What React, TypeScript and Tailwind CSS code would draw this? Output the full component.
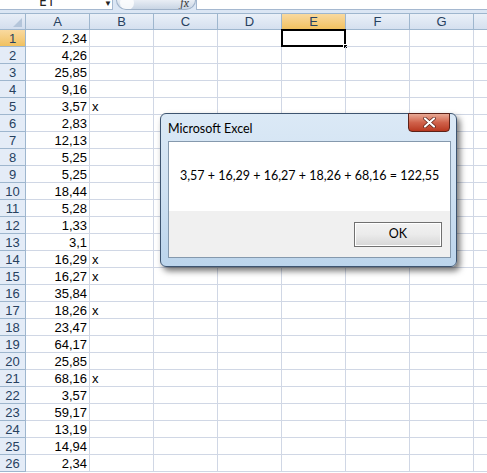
const rows: [string, string][] = [
  ["2,34", ""],
  ["4,26", ""],
  ["25,85", ""],
  ["9,16", ""],
  ["3,57", "x"],
  ["2,83", ""],
  ["12,13", ""],
  ["5,25", ""],
  ["5,25", ""],
  ["18,44", ""],
  ["5,28", ""],
  ["1,33", ""],
  ["3,1", ""],
  ["16,29", "x"],
  ["16,27", "x"],
  ["35,84", ""],
  ["18,26", "x"],
  ["23,47", ""],
  ["64,17", ""],
  ["25,85", ""],
  ["68,16", "x"],
  ["3,57", ""],
  ["59,17", ""],
  ["13,19", ""],
  ["14,94", ""],
  ["2,34", ""],
];

const letters = ["A", "B", "C", "D", "E", "F", "G", ""];

function FormulaBar() {
  return (
    <div className="flex h-[13px] bg-[#dbe6f4]">
      <div className="relative h-[10px] w-[113px] overflow-hidden border-b border-r border-[#a5b8d0] bg-white">
        <span className="absolute left-[39px] top-[-7px] text-[14px] leading-[16px] text-[#222]">E1</span>
        <span className="absolute left-[104px] top-[-2px] text-[8px] leading-[10px] text-[#222]">▼</span>
      </div>
      <div className="relative ml-[3px] h-[10px] w-[80px] overflow-hidden rounded-b-[10px] border border-t-0 border-[#9fb2c9] bg-gradient-to-b from-[#e9eef5] to-[#c9d5e4]">
        <span className="absolute left-[3px] top-[-4px] h-[14px] w-[14px] rounded-full bg-white/80" />
        <span className="absolute right-[6px] top-[-4px] font-serif text-[12px] leading-[14px] italic text-[#444]">fx</span>
      </div>
      <div className="h-[10px] flex-1 border-b border-l border-[#a5b8d0] bg-white" />
    </div>
  );
}

function Sheet() {
  return (
    <div className="grid grid-cols-[26px_64px_64px_64px_64px_64px_64px_64px_64px] font-['Liberation_Sans',Arial,sans-serif] text-[13px] text-black">
      <div className="relative h-[17px] border-b border-r border-t border-[#9eb6ce] bg-gradient-to-b from-[#e8eef7] to-[#d3deee]">
        <span className="absolute bottom-[2px] right-[3px] h-0 w-0 border-b-[9px] border-l-[9px] border-b-[#b4c5da] border-l-transparent" />
      </div>
      {letters.map((l, i) => (
        <div
          key={i}
          className={`flex h-[17px] items-center justify-center border-b border-r border-t border-[#9eb6ce] leading-none text-[#27415f] ${
            l === "E"
              ? "bg-gradient-to-b from-[#f9d99f] to-[#f1c15f]"
              : "bg-gradient-to-b from-[#eaf0f8] to-[#d5e0ef]"
          }`}
        >
          {l}
        </div>
      ))}
      {rows.map(([a, b], r) => (
        <RowCells key={r} n={r + 1} a={a} b={b} />
      ))}
    </div>
  );
}

function RowCells({ n, a, b }: { n: number; a: string; b: string }) {
  return (
    <>
      <div
        className={`flex h-[17px] items-center justify-center border-b border-r border-[#9eb6ce] leading-none text-[#27415f] ${
          n === 1 ? "bg-gradient-to-b from-[#f9d99f] to-[#f1c15f]" : "bg-[#e4ecf7]"
        }`}
      >
        {n}
      </div>
      <div className="flex h-[17px] items-center justify-end border-b border-r border-[#d0d7e5] pr-[2px] leading-none">{a}</div>
      <div className="flex h-[17px] items-center border-b border-r border-[#d0d7e5] pl-[2px] leading-none">{b}</div>
      {["C", "D", "E", "F", "G", "H"].map((c) => (
        <div key={c} className="relative h-[17px] border-b border-r border-[#d0d7e5]">
          {n === 1 && c === "E" ? (
            <>
              <span className="absolute left-[-1px] top-[-1px] h-[18px] w-[65px] border-2 border-black" />
              <span className="absolute bottom-[-3px] right-[-3px] h-[5px] w-[5px] border border-white bg-black" />
            </>
          ) : null}
        </div>
      ))}
    </>
  );
}

function Dialog() {
  return (
    <div className="absolute left-[160px] top-[113px] flex h-[154px] w-[297px] flex-col rounded-[6px] border border-[#3d5470] bg-gradient-to-b from-[#dbe9f6] via-[#cfe1f2] to-[#bcd5ec] shadow-[3px_4px_6px_rgba(0,0,0,0.55)] font-['Lato',sans-serif]">
      <div className="relative h-[27px]">
        <span className="absolute left-[7px] top-[6px] text-[12.5px] text-black">Microsoft Excel</span>
        <div className="absolute right-[6px] top-[-1px] flex h-[19px] w-[42px] items-center justify-center rounded-b-[4px] border border-[#5d2218] bg-gradient-to-b from-[#e8a995] via-[#d0624b] to-[#b8381f]">
          <svg width="13" height="11" viewBox="0 0 13 11">
            <path d="M2 1.5 L11 9.5 M11 1.5 L2 9.5" stroke="#5a2016" strokeWidth="3.6" strokeLinecap="round" />
            <path d="M2 1.5 L11 9.5 M11 1.5 L2 9.5" stroke="#ffffff" strokeWidth="2.2" strokeLinecap="round" />
          </svg>
        </div>
      </div>
      <div className="mb-[8px] ml-[7px] mr-[5px] flex flex-1 flex-col border border-[#8599ad]">
        <div className="flex h-[69px] items-center bg-white pl-[11px] text-[12.5px] text-black">
          3,57 + 16,29 + 16,27 + 18,26 + 68,16 = 122,55
        </div>
        <div className="flex flex-1 items-start justify-end bg-[#f0f0f0] pr-[8px] pt-[11px]">
          <div className="flex h-[25px] w-[88px] items-center justify-center border border-[#707070] bg-gradient-to-b from-[#f2f2f2] via-[#ebebeb] to-[#d6d6d6] text-[12.5px] text-black shadow-[inset_0_0_0_1px_#ffffff]">
            OK
          </div>
        </div>
      </div>
    </div>
  );
}

export default function App() {
  return (
    <div className="relative h-[473px] w-[487px] overflow-hidden bg-white">
      <FormulaBar />
      <Sheet />
      <Dialog />
    </div>
  );
}
